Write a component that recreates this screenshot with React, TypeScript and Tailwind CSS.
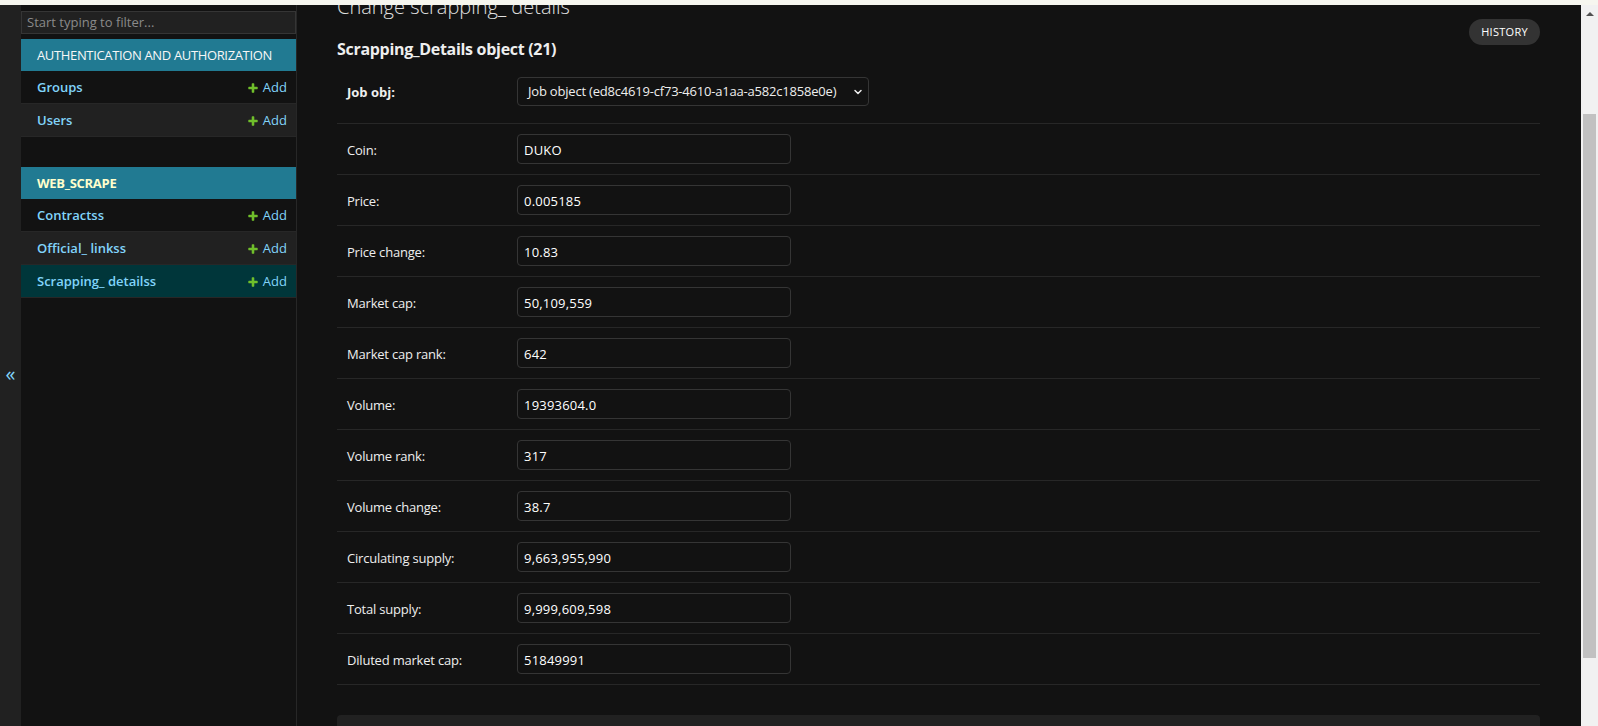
import { ChevronDown } from "lucide-react";

type Field = {
  label: string;
  value: string;
};

const fields: Field[] = [
  { label: "Coin:", value: "DUKO" },
  { label: "Price:", value: "0.005185" },
  { label: "Price change:", value: "10.83" },
  { label: "Market cap:", value: "50,109,559" },
  { label: "Market cap rank:", value: "642" },
  { label: "Volume:", value: "19393604.0" },
  { label: "Volume rank:", value: "317" },
  { label: "Volume change:", value: "38.7" },
  { label: "Circulating supply:", value: "9,663,955,990" },
  { label: "Total supply:", value: "9,999,609,598" },
  { label: "Diluted market cap:", value: "51849991" },
];

const AddIcon = () => (
  <svg width="12" height="12" viewBox="0 0 1792 1792" className="shrink-0">
    <path
      fill="#70bf2b"
      d="M1600 796v192q0 40-28 68t-68 28h-416v416q0 40-28 68t-68 28h-192q-40 0-68-28t-28-68v-416h-416q-40 0-68-28t-28-68v-192q0-40 28-68t68-28h416v-416q0-40 28-68t68-28h192q40 0 68 28t28 68v416h416q40 0 68 28t28 68z"
    />
  </svg>
);

type NavRowProps = {
  name: string;
  tone: "dark" | "light" | "selected";
};

const NavRow = ({ name, tone }: NavRowProps) => {
  const bg =
    tone === "selected"
      ? "bg-[#00363a]"
      : tone === "light"
        ? "bg-[#212121]"
        : "bg-[#121212]";
  return (
    <div
      className={`${bg} h-[33px] flex items-center justify-between pl-[16px] pr-[9px] pt-[1px] border-b border-[#272727] text-[13px]`}
    >
      <span className="font-semibold text-[#81d4fa]">{name}</span>
      <span className="flex items-center gap-[4px] text-[#81d4fa]">
        <AddIcon />
        Add
      </span>
    </div>
  );
};

const Caption = ({ text, current }: { text: string; current?: boolean }) => (
  <div
    className={`h-[32px] flex items-center pl-[16px] pt-[1px] bg-[#217a92] text-[13px] uppercase ${
      current ? "font-bold text-[#ffffcc] tracking-[-0.3px]" : "text-[#f7f7f7] tracking-[-0.35px]"
    }`}
  >
    {text}
  </div>
);

export default function App() {
  return (
    <div className="w-full h-[726px] overflow-hidden flex flex-col bg-[#121212] font-['Open_Sans',sans-serif] text-[#eeeeee]">
      <div className="h-[5px] shrink-0 bg-[#f6f6ef]" />
      <div className="flex flex-1 min-h-0">
        {/* toggle strip */}
        <div className="w-[21px] shrink-0 bg-[#212121] flex items-center justify-center text-[#81d4fa] text-[20px] leading-none pt-[17px]">
          «
        </div>

        {/* sidebar */}
        <nav className="w-[276px] shrink-0 border-r border-[#272727] bg-[#121212] flex flex-col">
          <div className="mt-[6px] mb-[5px] h-[23px] border border-[#353535] bg-[#212121] flex items-center px-[5px] text-[13px] text-[#8a8a8a]">
            Start typing to filter...
          </div>
          <Caption text="Authentication and Authorization" />
          <NavRow name="Groups" tone="dark" />
          <NavRow name="Users" tone="light" />
          <div className="h-[30px]" />
          <Caption text="WEB_SCRAPE" current />
          <NavRow name="Contractss" tone="dark" />
          <NavRow name="Official_ linkss" tone="light" />
          <NavRow name="Scrapping_ detailss" tone="selected" />
        </nav>

        {/* main */}
        <main className="flex-1 min-w-0 overflow-hidden pl-[40px] pr-[41px]">
          <div className="flex justify-between items-start">
            <div>
              <h1 className="mt-[-10px] text-[20px] leading-[24px] font-light text-[#e0e0e0]">
                Change scrapping_ details
              </h1>
              <h2 className="mt-[20px] text-[16px] leading-[20px] font-bold tracking-[-0.3px] text-[#eeeeee]">
                Scrapping_Details object (21)
              </h2>
            </div>
            <button className="mt-[14px] h-[26px] px-[12px] rounded-full bg-[#333333] text-white text-[11px] tracking-[0.3px] uppercase">
              History
            </button>
          </div>

          <div className="mt-[8px]">
            <div className="h-[57px] pt-[10px] flex items-start border-b border-[#272727] px-[10px]">
              <label className="w-[170px] pt-[6px] text-[13px] font-bold text-[#eeeeee]">
                Job obj:
              </label>
              <div className="w-[352px] h-[29px] border border-[#353535] rounded-[4px] flex items-center justify-between pl-[10px] pr-[4px] text-[13px] tracking-[-0.2px] text-[#eeeeee]">
                <span>Job object (ed8c4619-cf73-4610-a1aa-a582c1858e0e)</span>
                <ChevronDown size={12} strokeWidth={3} />
              </div>
            </div>

            {fields.map((f) => (
              <div
                key={f.label}
                className="h-[51px] flex items-center border-b border-[#272727] px-[10px]"
              >
                <label className="w-[170px] pt-[3px] text-[13px] tracking-[-0.2px] text-[#eeeeee]">
                  {f.label}
                </label>
                <div className="w-[274px] h-[30px] border border-[#353535] rounded-[4px] flex items-center px-[6px] pt-[3px] text-[13px] tracking-[0.2px] text-white">
                  {f.value}
                </div>
              </div>
            ))}

            <div className="mt-[30px] h-[40px] rounded-[4px] bg-[#212121]" />
          </div>
        </main>

        {/* scrollbar */}
        <div className="w-[17px] shrink-0 bg-[#f1f1f1] flex flex-col items-center">
          <div className="h-[17px] flex items-center justify-center">
            <div className="w-0 h-0 border-l-[4px] border-r-[4px] border-b-[4px] border-l-transparent border-r-transparent border-b-[#505050]" />
          </div>
          <div className="mt-[92px] w-[13px] h-[544px] bg-[#c1c1c1]" />
        </div>
      </div>
    </div>
  );
}
